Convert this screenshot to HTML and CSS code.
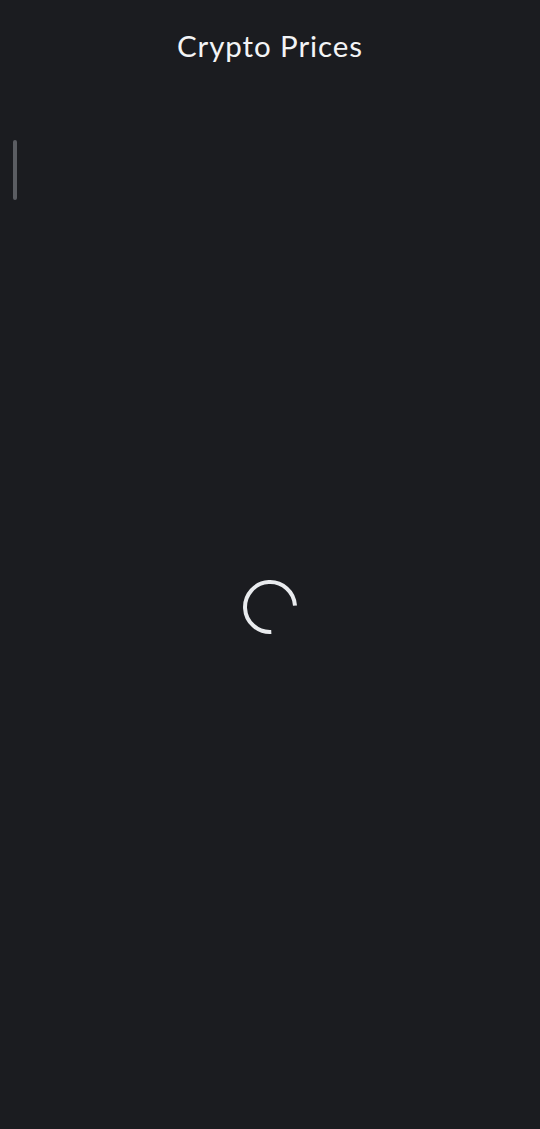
FILE: index.html
```html
<!DOCTYPE html>
<html lang="en">
<head>
<meta charset="utf-8">
<title>Crypto Prices</title>
<link rel="stylesheet" href="styles.css">
</head>
<body>
<div class="app">
  <header class="header">
    <h1 class="title">Crypto Prices</h1>
  </header>
  <main class="content">
    <div class="scrollbar"></div>
    <svg class="spinner" width="60" height="60" viewBox="0 0 60 60" aria-label="Loading">
      <path d="M31.3 55 A25 25 0 1 1 55 28.7" fill="none" stroke="#e9ebee" stroke-width="4" stroke-linecap="butt"/>
    </svg>
  </main>
</div>
</body>
</html>
```
FILE: styles.css
```css
html, body {
  margin: 0;
  padding: 0;
  background: #1b1c20;
}
.app {
  display: flex;
  flex-direction: column;
  height: 1129px;
  font-family: Lato, "Noto Sans", sans-serif;
}
.header {
  height: 85px;
  display: flex;
  align-items: center;
  justify-content: center;
  flex: none;
}
.title {
  margin: 0;
  margin-top: 6px;
  font-size: 29.5px;
  font-weight: 400;
  color: #f3f4f6;
  letter-spacing: 0.9px;
}
.content {
  flex: 1;
  position: relative;
  display: flex;
  align-items: center;
  justify-content: center;
}
.scrollbar {
  position: absolute;
  left: 13px;
  top: 55px;
  width: 4px;
  height: 60px;
  border-radius: 2px;
  background: #5b5d62;
}
.spinner {
  display: block;
}
```
